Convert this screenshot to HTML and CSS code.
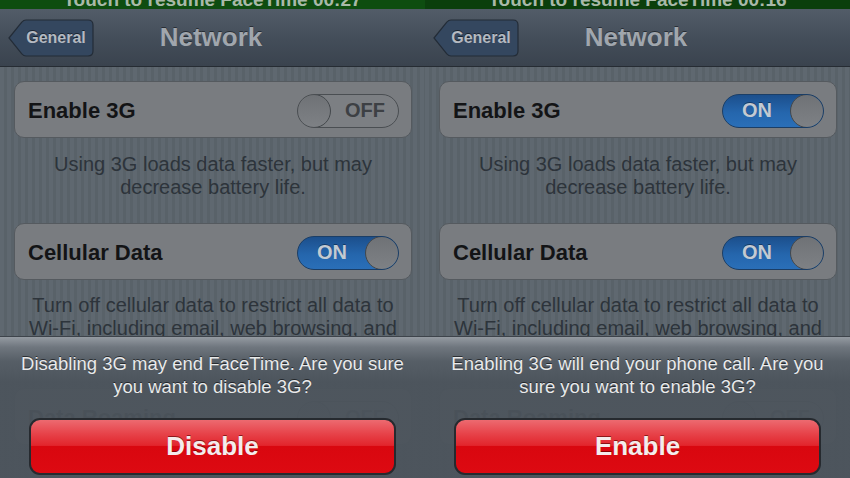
FILE: index.html
```html
<!DOCTYPE html>
<html>
<head>
<meta charset="utf-8">
<link rel="stylesheet" href="styles.css">
</head>
<body>
<div class="pair">
  <div class="screen">
    <div class="status"><div class="status-text">Touch to resume FaceTime 00:27</div></div>
    <div class="navbar">
      <div class="back">
        <svg class="back-shape" width="86" height="38" viewBox="0 0 86 38"><path d="M1,19 L14,3 Q15.5,1 18,1 L80,1 Q85,1 85,6 L85,32 Q85,37 80,37 L18,37 Q15.5,37 14,35 Z" fill="#34475f" stroke="#232c37" stroke-width="1.2"/></svg>
        <span class="back-label">General</span>
      </div>
      <div class="title">Network</div>
      <div class="spacer"></div>
    </div>
    <div class="content">
      <div class="cell">
        <span class="label">Enable 3G</span>
        <div class="toggle off"><span class="knob"></span><span class="tlabel">OFF</span></div>
      </div>
      <p class="note">Using 3G loads data faster, but may decrease battery life.</p>
      <div class="cell cell2">
        <span class="label">Cellular Data</span>
        <div class="toggle on"><span class="tlabel">ON</span><span class="knob"></span></div>
      </div>
      <p class="note note2">Turn off cellular data to restrict all data to Wi-Fi, including email, web browsing, and</p>
      <div class="cell cell3">
        <span class="label">Data Roaming</span>
        <div class="toggle off"><span class="knob"></span><span class="tlabel">OFF</span></div>
      </div>
    </div>
    <div class="sheet">
      <p class="msg">Disabling 3G may end FaceTime. Are you sure you want to disable 3G?</p>
      <div class="redbtn">Disable</div>
    </div>
  </div>

  <div class="screen">
    <div class="status dark"><div class="status-text">Touch to resume FaceTime 00:16</div></div>
    <div class="navbar">
      <div class="back">
        <svg class="back-shape" width="86" height="38" viewBox="0 0 86 38"><path d="M1,19 L14,3 Q15.5,1 18,1 L80,1 Q85,1 85,6 L85,32 Q85,37 80,37 L18,37 Q15.5,37 14,35 Z" fill="#34475f" stroke="#232c37" stroke-width="1.2"/></svg>
        <span class="back-label">General</span>
      </div>
      <div class="title">Network</div>
      <div class="spacer"></div>
    </div>
    <div class="content">
      <div class="cell">
        <span class="label">Enable 3G</span>
        <div class="toggle on"><span class="tlabel">ON</span><span class="knob"></span></div>
      </div>
      <p class="note">Using 3G loads data faster, but may decrease battery life.</p>
      <div class="cell cell2">
        <span class="label">Cellular Data</span>
        <div class="toggle on"><span class="tlabel">ON</span><span class="knob"></span></div>
      </div>
      <p class="note note2">Turn off cellular data to restrict all data to Wi-Fi, including email, web browsing, and</p>
      <div class="cell cell3">
        <span class="label">Data Roaming</span>
        <div class="toggle off"><span class="knob"></span><span class="tlabel">OFF</span></div>
      </div>
    </div>
    <div class="sheet">
      <p class="msg">Enabling 3G will end your phone call. Are you sure you want to enable 3G?</p>
      <div class="redbtn">Enable</div>
    </div>
  </div>
</div>
</body>
</html>
```
FILE: styles.css
```css
html, body {
  margin: 0;
  padding: 0;
  background: #4f565e;
}
body {
  font-family: "Liberation Sans", Arial, sans-serif;
}
.pair {
  display: flex;
  width: 850px;
  height: 478px;
}
.screen {
  width: 425px;
  height: 478px;
  position: relative;
  overflow: hidden;
  display: flex;
  flex-direction: column;
  flex: none;
}
.status {
  height: 9px;
  overflow: hidden;
  background: #0e4d10;
  flex: none;
}
.status.dark {
  background: #0b3f0c;
}
.status-text {
  margin-top: -10px;
  line-height: 19px;
  font-size: 19px;
  font-weight: bold;
  color: #a9b9a9;
  text-align: center;
  white-space: nowrap;
}
.navbar {
  height: 58px;
  flex: none;
  display: grid;
  grid-template-columns: 1fr auto 1fr;
  align-items: center;
  padding: 0 8px;
  background: linear-gradient(#525c68, #444e5a 50%, #3a434e);
  border-bottom: 1px solid #262c33;
  box-sizing: border-box;
}
.back {
  position: relative;
  width: 86px;
  height: 38px;
  display: flex;
  align-items: center;
  justify-content: center;
  padding-left: 10px;
  box-sizing: border-box;
}
.back-shape {
  position: absolute;
  left: 0;
  top: 0;
}
.back-label {
  position: relative;
  font-size: 16px;
  font-weight: bold;
  color: #b4bac1;
  text-shadow: 0 -1px 0 rgba(0,0,0,0.5);
}
.title {
  font-size: 26px;
  font-weight: bold;
  color: #a0a6ad;
  text-shadow: 0 -1px 0 rgba(0,0,0,0.45);
  margin-right: 3px;
}
.content {
  flex: 1;
  padding: 14px 13px 0 14px;
  background: repeating-linear-gradient(90deg, #5f6870 0px, #5f6870 4px, #596269 4px, #596269 7px);
}
.cell {
  height: 57px;
  box-sizing: border-box;
  border: 1px solid #555a5f;
  border-radius: 10px;
  background: #797c80;
  display: flex;
  align-items: center;
  justify-content: space-between;
  padding: 2px 12px 0 13px;
}
.cell3 {
  margin-top: 48px;
}
.label {
  font-size: 22px;
  font-weight: bold;
  color: #131416;
}
.toggle {
  width: 102px;
  height: 34px;
  box-sizing: border-box;
  border-radius: 17px;
  display: flex;
  align-items: center;
  overflow: hidden;
}
.toggle.off {
  background: #7c7f83;
  border: 1px solid #4a4e52;
}
.toggle.on {
  background: linear-gradient(#1c4f8c, #2566ad 55%, #2a6fb8);
  border: 1px solid #1b3e66;
}
.knob {
  width: 34px;
  height: 34px;
  box-sizing: border-box;
  border-radius: 50%;
  flex: none;
  background: linear-gradient(#6f7276, #7e8185);
  border: 1px solid #44484c;
  margin: -1px;
}
.tlabel {
  flex: 1;
  text-align: center;
  font-size: 20px;
  font-weight: bold;
}
.off .tlabel {
  color: #3d4044;
  padding-left: 2px;
}
.on .tlabel {
  color: #c3cad2;
  text-shadow: 0 -1px 0 rgba(0,0,0,0.35);
}
.note {
  margin: 15px 0 24px;
  font-size: 20px;
  line-height: 23px;
  color: #2d343b;
  text-align: center;
  padding: 0 2px;
}
.note.note2 {
  margin: 14px 0 0;
}
.sheet {
  position: absolute;
  left: 0;
  right: 0;
  bottom: 0;
  height: 141px;
  border-top: 1px solid #3e444b;
  background: linear-gradient(rgba(150,156,163,0.98) 0px, rgba(112,119,127,0.97) 10px, rgba(86,94,102,0.96) 24px, rgba(76,84,92,0.955) 45px, rgba(76,84,92,0.955) 100%);
  display: flex;
  flex-direction: column;
  align-items: center;
}
.msg {
  margin: 15px 0 0;
  font-size: 18.5px;
  line-height: 23px;
  color: #e9eaeb;
  text-align: center;
  text-shadow: 0 -1px 0 rgba(0,0,0,0.55);
  padding: 0 18px;
}
.redbtn {
  margin-top: 20px;
  width: 367px;
  height: 57px;
  box-sizing: border-box;
  flex: none;
  border: 2px solid #262a2f;
  border-radius: 11px;
  background: linear-gradient(#ec6a70 0%, #e7444b 25%, #e2252c 48%, #d9070f 50%, #dd0a12 100%);
  display: flex;
  align-items: center;
  justify-content: center;
  font-size: 26px;
  font-weight: bold;
  color: #f4ecec;
  text-shadow: 0 -1px 0 rgba(80,0,0,0.6);
}
```
